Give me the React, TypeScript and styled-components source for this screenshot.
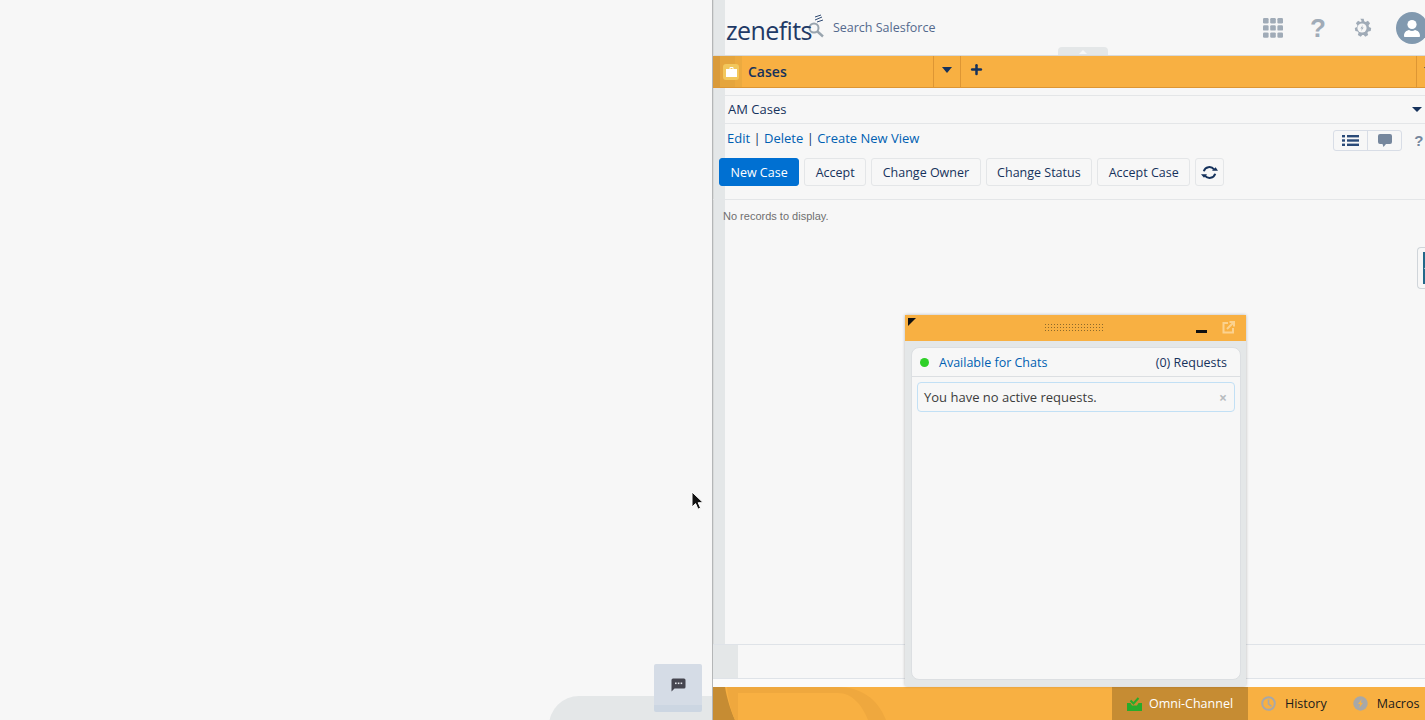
import React from 'react';
import styled, { createGlobalStyle } from 'styled-components';
import { FiPlus } from 'react-icons/fi';

const GlobalStyle = createGlobalStyle`
  html, body {
    margin: 0;
    padding: 0;
    height: 720px;
    overflow: hidden;
    background: #f7f7f7;
    font-family: 'Open Sans', 'Liberation Sans', sans-serif;
  }
`;

const NAVY = '#16325c';
const LINK = '#005fb2';
const ORANGE = '#f8b042';
const ORANGE_DARK = '#c68c33';

const BUTTONS = ['Accept', 'Change Owner', 'Change Status', 'Accept Case'];

const App = () => (
  <>
    <GlobalStyle />
    <Page>
      <LeftPanel>
        <BottomHump />
        <ChatButton>
          <svg width="15" height="14" viewBox="0 0 15 14">
            <path d="M2 0.5h11a1.5 1.5 0 0 1 1.5 1.5v7a1.5 1.5 0 0 1-1.5 1.5H3.5L0.5 13.5V2A1.5 1.5 0 0 1 2 0.5z" fill="#45454f" />
            <rect x="4" y="4.5" width="1.6" height="1.6" fill="#e3e6ea" />
            <rect x="6.8" y="4.5" width="1.6" height="1.6" fill="#e3e6ea" />
            <rect x="9.6" y="4.5" width="1.6" height="1.6" fill="#e3e6ea" />
          </svg>
        </ChatButton>
        <Cursor>
          <svg width="13" height="20" viewBox="0 0 13 20">
            <path d="M1 1v15l3.6-3.4 2.4 5.6 2.6-1.1-2.4-5.4h5z" fill="#111" stroke="#fff" strokeWidth="1" />
          </svg>
        </Cursor>
      </LeftPanel>

      <RightPanel>
        <Rail />
        <Header>
          <Logo>zenefits</Logo>
          <LogoMark>
            <svg width="24" height="26" viewBox="0 0 24 26">
              <path d="M9 3l6-2M9 6l7-3M11 8l6-2" stroke="#2f4a73" strokeWidth="1" fill="none" />
              <circle cx="8" cy="14" r="4.5" fill="none" stroke="#98a4ae" strokeWidth="2" />
              <path d="M11.5 17.5l5.5 5" stroke="#98a4ae" strokeWidth="2.4" />
            </svg>
          </LogoMark>
          <SearchLabel>Search Salesforce</SearchLabel>
          <HeaderIcons>
            <svg width="20" height="20" viewBox="0 0 20 20" fill="#a0abb7">
              {[0, 7.2, 14.4].map((y) =>
                [0, 7.2, 14.4].map((x) => <rect key={`${x}-${y}`} x={x} y={y} width="5.6" height="5.4" rx="1.2" />),
              )}
            </svg>
            <HelpGlyph>?</HelpGlyph>
            <svg width="20" height="20" viewBox="0 0 20 20">
              <path
                d="M8.3 0.8h3.4l.5 2.4 1.5.7 2.2-1.2 2.2 2.6-1.5 2 .4 1.6 2.2 1v0l-.5 3.2-2.4.3-.9 1.4.8 2.3-2.9 1.7-1.6-1.8h-1.4l-1.6 1.8-2.9-1.7.8-2.3-.9-1.4-2.4-.3-.5-3.2 2.2-1 .4-1.6-1.5-2 2.2-2.6 2.2 1.2 1.5-.7z"
                fill="#a0abb7"
              />
              <circle cx="10" cy="10" r="4.6" fill="#f7f7f7" />
              <path d="M11 6.8l-2.6 3.6h1.6l-1 2.8 2.7-3.7H10z" fill="#a0abb7" />
            </svg>
            <Avatar>
              <svg width="20" height="20" viewBox="0 0 20 20" fill="#fff">
                <circle cx="10" cy="6.5" r="4.6" />
                <path d="M2 18c0-4 2.5-5.4 5-6 1.800 1.300 4.200 1.300 6 0 2.500.6 5 2 5 6 0 .6-.5 1-1 1H3c-.5 0-1-.4-1-1z" />
              </svg>
            </Avatar>
          </HeaderIcons>
          <PullHandle>
            <svg width="8" height="4" viewBox="0 0 8 4">
              <path d="M0 4l4-4 4 4z" fill="#f7f7f7" />
            </svg>
          </PullHandle>
        </Header>

        <TabBar>
          <TabLead>
            <TabIcon>
              <svg width="11" height="10" viewBox="0 0 11 10" fill="#fff">
                <path d="M3.500 2V1a1 1 0 0 1 1-1h2a1 1 0 0 1 1 1v1H11v8H0V2zM4.500 1v1h2V1z" />
              </svg>
            </TabIcon>
          </TabLead>
          <TabTitle>Cases</TabTitle>
          <TabCaret>
            <Caret />
          </TabCaret>
          <TabAdd>
            <FiPlus size={15} strokeWidth={4} color={NAVY} />
          </TabAdd>
          <TabEnd>
            <Caret />
          </TabEnd>
        </TabBar>

        <Content>
          <ViewSelect>
            AM Cases
            <SmallCaret />
          </ViewSelect>
          <LinkRow>
            <ViewLinks>
              <a>Edit</a> | <a>Delete</a> | <a>Create New View</a>
            </ViewLinks>
            <ViewTools>
              <ToggleGroup>
                <ToggleItem>
                  <svg width="17" height="11" viewBox="0 0 17 11" fill="#2a4a78">
                    <rect y="0" width="3" height="2.4" />
                    <rect y="4.300" width="3" height="2.4" />
                    <rect y="8.600" width="3" height="2.4" />
                    <rect x="5" y="0" width="12" height="2.4" />
                    <rect x="5" y="4.300" width="12" height="2.4" />
                    <rect x="5" y="8.600" width="12" height="2.4" />
                  </svg>
                </ToggleItem>
                <ToggleItem>
                  <svg width="14" height="13" viewBox="0 0 14 13" fill="#76879d">
                    <path d="M2 0h10a2 2 0 0 1 2 2v6a2 2 0 0 1-2 2H8l-2.500 3-1-3H2a2 2 0 0 1-2-2V2a2 2 0 0 1 2-2z" />
                  </svg>
                </ToggleItem>
              </ToggleGroup>
              <SmallHelp>?</SmallHelp>
            </ViewTools>
          </LinkRow>
          <Toolbar>
            <PrimaryButton>New Case</PrimaryButton>
            {BUTTONS.map((label) => (
              <ToolButton key={label}>{label}</ToolButton>
            ))}
            <RefreshButton>
              <svg width="17" height="15" viewBox="0 0 17 15" fill="none">
                <path d="M2.800 6.200A5.800 5.800 0 0 1 13 4.400" stroke={NAVY} strokeWidth="2" />
                <path d="M14.200 8.800A5.800 5.800 0 0 1 4 10.600" stroke={NAVY} strokeWidth="2" />
                <path d="M11 5.800h6L14.600 2.200zM0 9.200h6l-3 3.600z" fill={NAVY} />
              </svg>
            </RefreshButton>
          </Toolbar>
          <EmptyNote>No records to display.</EmptyNote>
          <SideToggle>
            <SideToggleInner>
              <SideChevron />
            </SideToggleInner>
          </SideToggle>
        </Content>

        <BottomStrip />
        <Footer>
          <FooterArt width="180" height="33" viewBox="0 0 180 33">
            <path d="M0 0h12c2 12 6 24 10 33H0z" fill={ORANGE_DARK} />
            <path d="M12 0h13v6h100c14 0 24 12 30 27h18C165 12 148 0 125 0z" fill="#efa83e" />
            <path d="M14 0h11v33H22C18 24 15 12 14 0z" fill="#efa83e" />
          </FooterArt>
          <FooterTabs>
            <OmniTab>
              <svg width="15" height="14" viewBox="0 0 15 14">
                <path d="M0 6h3.500l1.500 2.500h5L11.500 6H15v8H0z" fill="#27ab2b" />
                <path d="M3.500 3.500l3 3 5-5.500" fill="none" stroke="#27ab2b" strokeWidth="2" />
              </svg>
              Omni-Channel
            </OmniTab>
            <FooterTab>
              <svg width="15" height="15" viewBox="0 0 15 15" fill="none">
                <circle cx="7.500" cy="7.500" r="6.300" stroke="#a8a8a8" strokeWidth="2" />
                <path d="M7.500 3.500v4.300l3 2.500" stroke="#a8a8a8" strokeWidth="1.600" />
              </svg>
              History
            </FooterTab>
            <FooterTab>
              <svg width="15" height="15" viewBox="0 0 15 15">
                <circle cx="7.500" cy="7.500" r="7.200" fill="#a8a8a8" />
                <path d="M8.800 3L5 8h2.200l-1 4 3.800-5.200H7.800z" fill={ORANGE} />
              </svg>
              Macros
            </FooterTab>
          </FooterTabs>
        </Footer>

        <Widget>
          <WidgetHeader>
            <CornerMark />
            <DragGrip />
            <WidgetActions>
              <MinimizeBar />
              <svg width="13" height="13" viewBox="0 0 13 13" fill="none" stroke="#fbd28f" strokeWidth="2">
                <path d="M6 2H1.500v9.500H11V7" />
                <path d="M5 8l6.500-6.500M7.500 1H12v4.500" />
              </svg>
            </WidgetActions>
          </WidgetHeader>
          <WidgetBody>
            <WidgetCard>
              <StatusRow>
                <StatusDot />
                <StatusLink>Available for Chats</StatusLink>
                <RequestCount>(0) Requests</RequestCount>
              </StatusRow>
              <Notice>
                You have no active requests.
                <NoticeClose>×</NoticeClose>
              </Notice>
            </WidgetCard>
          </WidgetBody>
        </Widget>
      </RightPanel>
    </Page>
  </>
);

const Page = styled.div`
  display: grid;
  grid-template-columns: 712px 1fr;
  width: 1425px;
  height: 720px;
  overflow: hidden;
`;

const LeftPanel = styled.div`
  position: relative;
  background: #f7f7f7;
  overflow: hidden;
`;

const BottomHump = styled.div`
  position: absolute;
  left: 549px;
  top: 696px;
  width: 190px;
  height: 60px;
  background: #e4e7e8;
  border-radius: 30px 0 0 0;
`;

const ChatButton = styled.div`
  position: absolute;
  left: 654px;
  top: 664px;
  width: 48px;
  height: 48px;
  display: flex;
  align-items: center;
  justify-content: center;
  box-sizing: border-box;
  padding-bottom: 0;
  background: #d5dce6;
  border-bottom: 7px solid #ccd6e2;
  border-radius: 2px;
`;

const Cursor = styled.div`
  position: absolute;
  left: 691px;
  top: 491px;
  line-height: 0;
`;

const RightPanel = styled.div`
  position: relative;
  display: flex;
  flex-direction: column;
  height: 720px;
  border-left: 1px solid #b4b6b7;
  box-sizing: border-box;
`;

const Rail = styled.div`
  position: absolute;
  left: 0;
  top: 0;
  width: 12px;
  height: 687px;
  background: #e4e7e8;
  border-left: 1px solid #d8dada;
  box-sizing: border-box;
`;

const Header = styled.header`
  position: relative;
  display: flex;
  align-items: center;
  height: 55px;
  flex: none;
  padding-left: 13px;
  box-sizing: border-box;
`;

const Logo = styled.span`
  font-family: 'Open Sans', 'Liberation Sans', sans-serif;
  font-size: 25px;
  letter-spacing: -0.6px;
  color: #1f3a66;
  position: relative;
  top: 2px;
  z-index: 1;
`;

const LogoMark = styled.span`
  position: relative;
  left: -6px;
  top: -1px;
  line-height: 0;
`;

const SearchLabel = styled.span`
  font-size: 12.5px;
  color: #54698d;
  margin-left: -3px;
`;

const HeaderIcons = styled.div`
  display: flex;
  align-items: center;
  gap: 26px;
  margin-left: auto;
  padding-right: 4px;
`;

const HelpGlyph = styled.span`
  width: 17px;
  text-align: center;
  font-family: 'Liberation Sans', sans-serif;
  font-size: 26px;
  font-weight: 700;
  line-height: 26px;
  color: #a0abb7;
`;

const Avatar = styled.div`
  width: 32px;
  height: 32px;
  margin-left: -2px;
  border-radius: 50%;
  background: #8199af;
  display: flex;
  align-items: center;
  justify-content: center;
`;

const PullHandle = styled.div`
  position: absolute;
  left: 345px;
  bottom: 0;
  width: 50px;
  height: 8px;
  background: #e4e7e8;
  border-radius: 4px 4px 0 0;
  display: flex;
  justify-content: center;
  padding-top: 3px;
  box-sizing: border-box;
  line-height: 0;
`;

const TabBar = styled.nav`
  position: relative;
  display: flex;
  align-items: stretch;
  flex: none;
  height: 33px;
  background: ${ORANGE};
  border-top: 1px solid #d8dadb;
  border-bottom: 1px solid #dd9634;
  box-sizing: border-box;
`;

const TabLead = styled.div`
  width: 29px;
  flex: none;
  display: flex;
  align-items: center;
  padding-left: 10px;
  box-sizing: border-box;
  background: linear-gradient(to right, #d99a3a 0 7px, #e5a53d 7px 22px, #ecaa3f 22px 29px);
`;

const TabIcon = styled.div`
  width: 16px;
  height: 16px;
  border-radius: 3px;
  background: #f2c75c;
  display: flex;
  align-items: center;
  justify-content: center;
`;

const TabTitle = styled.div`
  width: 191px;
  flex: none;
  padding-left: 6px;
  box-sizing: border-box;
  font-size: 14px;
  font-weight: 600;
  line-height: 31px;
  color: ${NAVY};
`;

const TabCaret = styled.div`
  width: 28px;
  flex: none;
  display: flex;
  align-items: center;
  justify-content: center;
  border-left: 1px solid #dd9634;
  border-right: 1px solid #dd9634;
  box-sizing: border-box;
  padding-bottom: 4px;
`;

const TabAdd = styled.div`
  display: flex;
  align-items: center;
  padding: 0 0 4px 8px;
`;

const TabEnd = styled.div`
  margin-left: auto;
  width: 16px;
  display: flex;
  align-items: center;
  padding: 0 0 4px 7px;
  border-left: 1px solid #dd9634;
  box-sizing: border-box;
  overflow: hidden;
  flex: none;
`;

const Caret = styled.span`
  flex: none;
  width: 0;
  height: 0;
  border-left: 5px solid transparent;
  border-right: 5px solid transparent;
  border-top: 6px solid ${NAVY};
`;

const SmallCaret = styled(Caret)`
  position: absolute;
  right: 9px;
  top: 11px;
  border-left-width: 5px;
  border-right-width: 5px;
  border-top-width: 5px;
`;

const Content = styled.main`
  position: relative;
  flex: 1;
  padding: 7px 0 0 6px;
  box-sizing: border-box;
`;

const ViewSelect = styled.div`
  position: relative;
  height: 29px;
  border: 1px solid #e4e6e8;
  border-right-color: #e4e6e8;
  box-sizing: border-box;
  padding-left: 8px;
  font-size: 13px;
  line-height: 27px;
  color: ${NAVY};
`;

const LinkRow = styled.div`
  display: flex;
  align-items: flex-start;
  justify-content: space-between;
  height: 34px;
  padding: 6px 0 0 8px;
  box-sizing: border-box;
`;

const ViewLinks = styled.div`
  font-size: 13px;
  line-height: 16px;
  color: ${NAVY};

  a {
    color: ${LINK};
  }
`;

const ViewTools = styled.div`
  display: flex;
  align-items: center;
  gap: 12px;
  padding-right: 9px;
`;

const ToggleGroup = styled.div`
  display: flex;
  width: 69px;
  height: 21px;
  border: 1px solid #d8dde6;
  border-radius: 3px;
  box-sizing: border-box;
`;

const ToggleItem = styled.div`
  flex: 1;
  display: flex;
  align-items: center;
  justify-content: center;

  & + & {
    border-left: 1px solid #d8dde6;
  }
`;

const SmallHelp = styled.span`
  font-family: 'Liberation Sans', sans-serif;
  font-size: 15px;
  font-weight: 700;
  line-height: 18px;
  color: #76879d;
`;

const Toolbar = styled.div`
  display: flex;
  gap: 5px;
  height: 41px;
  margin-left: 0;
  border-bottom: 1px solid #e4e6e8;
  margin-left: -6px;
  padding-left: 6px;
`;

const ToolButton = styled.button`
  height: 28px;
  padding: 0 10.5px;
  background: #f7f7f7;
  border: 1px solid #e4e6e8;
  border-radius: 3px;
  font-family: inherit;
  font-size: 12.5px;
  color: ${NAVY};
`;

const PrimaryButton = styled(ToolButton)`
  background: #0070d2;
  border-color: #0070d2;
  color: #fff;
`;

const RefreshButton = styled(ToolButton)`
  width: 29px;
  padding: 0;
  display: flex;
  align-items: center;
  justify-content: center;
`;

const EmptyNote = styled.p`
  margin: 10px 0 0 4px;
  font-family: 'Liberation Sans', sans-serif;
  font-size: 11px;
  line-height: 13px;
  color: #6f6f6f;
`;

const SideToggle = styled.div`
  position: absolute;
  right: 0;
  top: 159px;
  width: 15px;
  height: 42px;
  padding: 4px 0 4px 5px;
  box-sizing: border-box;
  background: #f7f7f7;
  border: 1px solid #d0d5da;
  border-right: none;
  border-radius: 4px 0 0 4px;
`;

const SideToggleInner = styled.div`
  height: 100%;
  background: #22688a;
  overflow: hidden;
  display: flex;
  align-items: center;
`;

const SideChevron = styled.span`
  width: 9px;
  height: 9px;
  margin-left: 3px;
  background: #e8edf0;
  transform: rotate(45deg);
  flex: none;
`;

const BottomStrip = styled.div`
  position: relative;
  flex: none;
  height: 43px;
  border-top: 1px solid #dfe3e8;
  box-sizing: border-box;
  background: linear-gradient(#f7f7f7 0 33px, #dfe3e8 33px 34px, #fbfbfb 34px);

  &::before {
    content: '';
    position: absolute;
    left: 0;
    top: 0;
    width: 25px;
    height: 33px;
    background: #e4e7e8;
  }
`;

const Footer = styled.footer`
  position: relative;
  display: flex;
  flex: none;
  height: 33px;
  background: ${ORANGE};
  overflow: hidden;
`;

const FooterArt = styled.svg`
  position: absolute;
  left: 0;
  top: 0;
`;

const FooterTabs = styled.div`
  position: relative;
  display: flex;
  margin-left: 399px;
`;

const FooterTab = styled.div`
  display: flex;
  align-items: center;
  gap: 9px;
  padding: 0 13px;
  font-size: 12.5px;
  color: #1b1b1b;
`;

const OmniTab = styled(FooterTab)`
  width: 136px;
  box-sizing: border-box;
  justify-content: center;
  gap: 7px;
  background: ${ORANGE_DARK};
  color: #fff;
`;

const Widget = styled.section`
  position: absolute;
  left: 192px;
  top: 315px;
  width: 341px;
  height: 371px;
  display: flex;
  flex-direction: column;
  box-shadow: 0 0 3px rgba(0, 0, 0, 0.25);
`;

const WidgetHeader = styled.div`
  position: relative;
  flex: none;
  height: 26px;
  background: ${ORANGE};
  display: flex;
  justify-content: flex-end;
`;

const CornerMark = styled.span`
  position: absolute;
  left: 3px;
  top: 3px;
  width: 0;
  height: 0;
  border-top: 8px solid #111;
  border-right: 8px solid transparent;
`;

const DragGrip = styled.span`
  position: absolute;
  left: 139px;
  top: 8px;
  width: 60px;
  height: 8px;
  background-image: radial-gradient(#8c6a2c 0.6px, transparent 0.7px);
  background-size: 3px 3px;
`;

const WidgetActions = styled.div`
  display: flex;
  align-items: center;
  gap: 15px;
  padding: 0 11px 2px 0;
`;

const MinimizeBar = styled.span`
  width: 11px;
  height: 3px;
  margin-top: 9px;
  background: #111;
`;

const WidgetBody = styled.div`
  flex: 1;
  padding: 6px 5px 6px 6px;
  background: #e4e7e8;
  display: flex;
`;

const WidgetCard = styled.div`
  flex: 1;
  background: #f7f7f7;
  border-radius: 8px;
  border: 1px solid #dcdfe2;
  box-sizing: border-box;
`;

const StatusRow = styled.div`
  display: flex;
  align-items: center;
  height: 29px;
  padding: 0 13px 0 8px;
  border-bottom: 1px solid #dcdfe2;
  box-sizing: border-box;
  font-size: 12.500px;
`;

const StatusDot = styled.span`
  width: 9px;
  height: 9px;
  border-radius: 50%;
  background: #2fd028;
`;

const StatusLink = styled.span`
  margin-left: 10px;
  color: ${LINK};
`;

const RequestCount = styled.span`
  margin-left: auto;
  color: ${NAVY};
`;

const Notice = styled.div`
  position: relative;
  height: 30px;
  margin: 5px 5px 0;
  padding-left: 6px;
  border: 1px solid #c2e0f5;
  border-radius: 4px;
  box-sizing: border-box;
  font-size: 13px;
  line-height: 28px;
  color: #3c3c3c;
`;

const NoticeClose = styled.span`
  position: absolute;
  right: 7px;
  top: 1px;
  font-size: 14px;
  font-weight: 700;
  color: #b8bcc0;
`;

export default App;
